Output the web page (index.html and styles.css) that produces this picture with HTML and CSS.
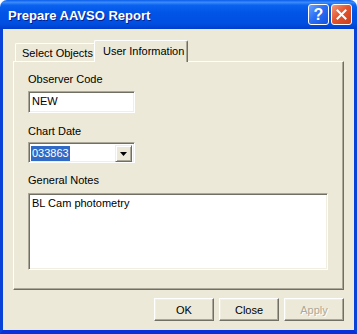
FILE: index.html
```html
<!DOCTYPE html>
<html>
<head>
<meta charset="utf-8">
<link rel="stylesheet" href="styles.css">
</head>
<body>
<div class="window">
  <div class="titlebar">
    <span class="title">Prepare AAVSO Report</span>
    <div class="caption-buttons">
      <div class="cap-btn help">?</div>
      <div class="cap-btn close">
        <svg width="11" height="11" viewBox="0 0 11 11"><path d="M1.5 1.5 L9.5 9.5 M9.5 1.5 L1.5 9.5" stroke="#fff" stroke-width="2" stroke-linecap="square"/></svg>
      </div>
    </div>
  </div>
  <div class="client">
    <div class="tabs">
      <div class="tab">Select Objects</div>
      <div class="tab active">User Information</div>
    </div>
    <div class="panel">
      <div class="label">Observer Code</div>
      <div class="edit short"><span>NEW</span></div>
      <div class="label l2">Chart Date</div>
      <div class="edit short combo">
        <span class="sel">033863</span>
        <div class="drop"><svg width="7" height="4" viewBox="0 0 7 4"><path d="M0 0 H7 L3.5 4 Z" fill="#000"/></svg></div>
      </div>
      <div class="label l3">General Notes</div>
      <div class="edit notes"><span>BL Cam photometry</span></div>
    </div>
    <div class="buttons">
      <div class="btn">OK</div>
      <div class="btn">Close</div>
      <div class="btn disabled">Apply</div>
    </div>
  </div>
</div>
</body>
</html>
```
FILE: styles.css
```css
* { box-sizing: border-box; }
html, body { margin: 0; padding: 0; background: #fff; }
body { font-family: "Liberation Sans", Arial, sans-serif; font-size: 11px; color: #000; }

.window {
  width: 357px;
  height: 334px;
  display: flex;
  flex-direction: column;
}

.titlebar {
  height: 29px;
  flex: none;
  border-radius: 7px 7px 0 0;
  background: linear-gradient(to bottom, #0a5de8 0%, #3a8cfc 8%, #0a62f0 18%, #0054e6 45%, #0050e2 80%, #0046d6 92%, #003ccc 100%);
  display: flex;
  align-items: center;
  padding: 0 5px 0 8px;
}
.title {
  color: #fff;
  font-family: "Liberation Sans", Arial, sans-serif;
  font-weight: bold;
  font-size: 13px;
  text-shadow: 1px 1px 0 #0a1e8c;
  flex: 1;
  margin-top: 1px;
}
.caption-buttons { display: flex; gap: 2px; }
.cap-btn {
  width: 21px;
  height: 21px;
  border: 1px solid #fff;
  border-radius: 3px;
  display: flex;
  align-items: center;
  justify-content: center;
  color: #fff;
}
.help {
  background: linear-gradient(135deg, #6ea2ff 0%, #2a6ff5 45%, #1452e2 100%);
  font-family: "Liberation Sans", sans-serif;
  font-weight: bold;
  font-size: 16px;
}
.close {
  background: linear-gradient(135deg, #f29a7c 0%, #e2562e 45%, #c8401d 100%);
}

.client {
  flex: 1;
  background: #ece9d8;
  border-left: 3px solid #0842d6;
  border-right: 3px solid #0842d6;
  border-bottom: 4px solid #0831d9;
  padding: 11px 10px 0 10px;
}

.tabs {
  height: 21px;
  display: flex;
  align-items: flex-end;
  padding-left: 2px;
  position: relative;
  z-index: 1;
}
.tab {
  height: 18px;
  padding: 3px 6px 0 6px;
  border-top: 1px solid #fff;
  border-left: 1px solid #fff;
  border-right: 1px solid #716f64;
  border-radius: 2px 2px 0 0;
  background: #ece9d8;
  line-height: 13px;
  white-space: nowrap;
}
.tab:first-child { width: 80px; }
.tab.active {
  height: 22px;
  margin-bottom: -1px;
  margin-left: -1px;
  padding: 4px 8px 0 8px;
  width: 94px;
  box-shadow: inset -1px 0 0 #aca899;
}

.panel {
  height: 229px;
  border-top: 1px solid #fff;
  border-left: 1px solid #fff;
  border-right: 1px solid #716f64;
  border-bottom: 1px solid #716f64;
  box-shadow: inset -1px -1px 0 #aca899;
  padding: 11px 14px 0 14px;
  display: flex;
  flex-direction: column;
}

.label { height: 13px; line-height: 13px; }
.l2 { margin-top: 12px; }
.l3 { margin-top: 11px; }

.edit {
  margin-top: 5px;
  background: #fff;
  border-top: 1px solid #aca899;
  border-left: 1px solid #aca899;
  border-right: 1px solid #fff;
  border-bottom: 1px solid #fff;
  box-shadow: inset 1px 1px 0 #716f64, inset -1px -1px 0 #f1efe2;
  padding: 3px 3px 0 3px;
  line-height: 13px;
}
.short { width: 107px; height: 22px; }
.combo {
  margin-top: 4px;
  height: 21px;
  display: flex;
  align-items: flex-start;
  padding: 2px 2px 2px 2px;
}
.sel {
  background: #316ac5;
  color: #fff;
  padding: 0 1px;
  height: 15px;
  line-height: 15px;
  margin-top: 1px;
}
.drop {
  margin-left: auto;
  width: 17px;
  height: 17px;
  background: #ece9d8;
  border-top: 1px solid #f1efe2;
  border-left: 1px solid #f1efe2;
  border-right: 1px solid #716f64;
  border-bottom: 1px solid #716f64;
  box-shadow: inset 1px 1px 0 #fff, inset -1px -1px 0 #aca899;
  display: flex;
  align-items: center;
  justify-content: center;
}
.notes {
  margin-top: 6px;
  width: 300px;
  height: 77px;
}

.buttons {
  display: flex;
  justify-content: flex-end;
  gap: 5px;
  margin-top: 8px;
}
.btn {
  width: 60px;
  height: 23px;
  border-top: 1px solid #fff;
  border-left: 1px solid #fff;
  border-right: 1px solid #716f64;
  border-bottom: 1px solid #716f64;
  box-shadow: inset -1px -1px 0 #aca899, inset 1px 1px 0 #f1efe2;
  background: #ece9d8;
  display: flex;
  align-items: center;
  justify-content: center;
}
.btn.disabled { color: #aca899; text-shadow: 1px 1px 0 #fff; }
```
